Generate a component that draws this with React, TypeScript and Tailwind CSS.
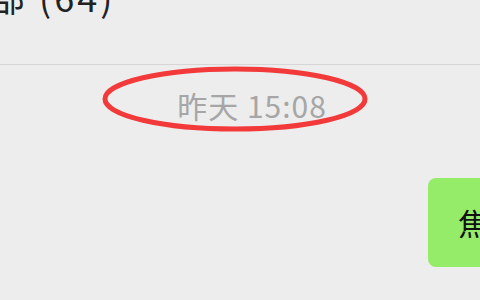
export default function App() {
  return (
    <div
      className="relative w-[480px] h-[300px] overflow-hidden bg-[#ededed]"
      style={{ fontFamily: '"Noto Sans CJK SC", "Noto Sans", sans-serif' }}
    >
      {/* header */}
      <div className="h-[65px] border-b border-[#d6d6d6] overflow-hidden">
        <div className="-mt-[24px] -ml-[11px] whitespace-nowrap text-[36px] leading-[40px] tracking-[3px] text-[#222]">
          部 (64)
        </div>
      </div>

      {/* timestamp */}
      <div className="pt-[24px] pl-[24px] text-center text-[30px] leading-[32px] tracking-[1px] text-[#a6a6a6]">
        昨天 15:08
      </div>

      {/* message */}
      <div className="mt-[57px] overflow-hidden whitespace-nowrap">
        <div className="ml-[428px] w-[200px] h-[89px] rounded-[8px] bg-[#95ec69] pl-[30px] pt-[26px] text-[30px] leading-[36px] text-[#111]">
          焦点
        </div>
      </div>

      {/* annotation */}
      <svg className="absolute left-0 top-0 pointer-events-none" width="480" height="300">
        <ellipse cx="235" cy="99" rx="130" ry="30" fill="none" stroke="#f23a3a" strokeWidth="5" />
      </svg>
    </div>
  );
}
